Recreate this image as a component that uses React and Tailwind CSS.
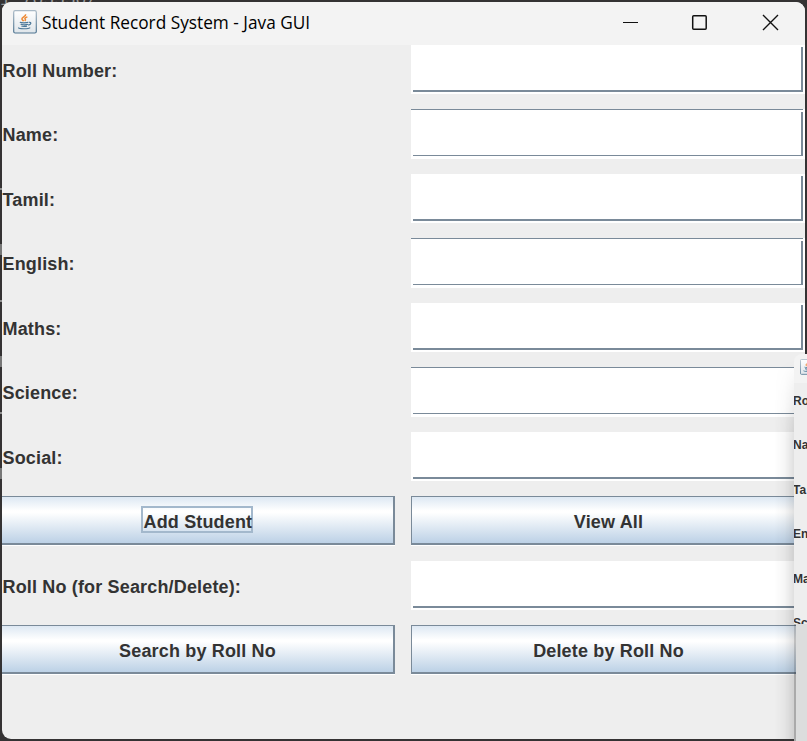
import React from "react";

function JavaIcon({ className }) {
  return (
    <svg viewBox="0 0 24 24" className={className}>
      <defs>
        <linearGradient id="frame" x1="0" y1="0" x2="0" y2="1">
          <stop offset="0" stopColor="#a9b9c6" />
          <stop offset="1" stopColor="#4d7390" />
        </linearGradient>
        <linearGradient id="face" x1="0" y1="0" x2="0" y2="1">
          <stop offset="0" stopColor="#ffffff" />
          <stop offset="1" stopColor="#dfe5ea" />
        </linearGradient>
      </defs>
      <rect x="0.7" y="0.7" width="22.6" height="22.3" rx="1.5" fill="url(#face)" stroke="url(#frame)" strokeWidth="1.2" />
      <path d="M12.6 4.2c.6 2-4 3-3.7 4.8.2 1 1.4 1.4 1.8 2.2M14.4 6.9c-2.2.7-3 1.5-2.2 2.3.6.7.2 1.1-.4 1.6" fill="none" stroke="#ee8a35" strokeWidth="1.5" />
      <path d="M6.8 12.3c1.5.7 6.5.7 8.6 0M7.6 14c.7 1 6 1 7.3.2M8.4 15.8c.7.8 4.6.8 5.6.2M16 12.3c2.8-.5 2.3 2.2-.8 2.8M5.2 17.6c1 1.5 10.4 1.5 12 0" fill="none" stroke="#4c7898" strokeWidth="1.2" />
    </svg>
  );
}

function Label({ children }) {
  return <div className="h-[52px] pl-[0.5px] leading-[52px] tracking-[0.16px]">{children}</div>;
}

/* Fields alternate between a raised 1px top rule and a 2px bottom rule. */
function Field({ ruled }) {
  return ruled ? (
    <div className="h-[50px] bg-white">
      <div className="mr-[2px] border-t border-[#7a8a99] pl-[2px] pt-[2px]">
        <div className="h-[44px] border-b border-r-2 border-[#7a8a99]" />
      </div>
    </div>
  ) : (
    <div className="h-[49px] bg-white px-[2px] pt-[2px]">
      <div className="h-[45px] border-b-2 border-r-2 border-[#7a8a99]" />
    </div>
  );
}

function Button({ children, left, focused }) {
  return (
    <div className={left ? "h-[50px] w-[394px] pr-px" : "h-[50px] w-[394px]"}>
      <div
        className={`flex h-[49px] items-center justify-center border-[#7a8a99] border-t border-b-2 bg-[linear-gradient(#dde8f3_0%,#ffffff_30%,#ffffff_34%,#bcd1e6_100%)] shadow-[0_1px_0_#ffffff] ${left ? "border-r-2" : "border-l"}`}
      >
        <span
          className={`whitespace-nowrap tracking-[0.16px] ${focused ? "mr-[2px] mb-px h-[27px] w-[112px] border-2 border-[#a3b8cc] pl-px pt-[2px] leading-[25px]" : "pt-[5px] leading-[25px]"}`}
        >
          {children}
        </span>
      </div>
    </div>
  );
}

const subjects = ["Roll Number:", "Name:", "Tamil:", "English:", "Maths:", "Science:", "Social:"];

export default function App() {
  return (
    <div className="grid h-[741px] w-[807px] overflow-hidden bg-[#343233] font-['Liberation_Sans',sans-serif]">
      {/* Slivers of the dark editor behind the window */}
      <div className="col-start-1 row-start-1">
        <div className="h-[188px] overflow-hidden">
          <p className="-mt-[9px] whitespace-nowrap font-['Liberation_Mono',monospace] text-[18px] leading-[18px] text-[#9a9a9a]">1.705550/</p>
        </div>
        <div className="grid w-[2px] auto-rows-[112px]">
          {[0, 1, 2].map((n) => (
            <div key={n}>
              <div className="h-[2px] bg-[#8e8e8e]" />
              <div className="mt-[54px] h-[11px] bg-[#777777]" />
            </div>
          ))}
        </div>
      </div>

      <main className="relative col-start-1 row-start-1 m-[2px] h-[737px] w-[803px] overflow-hidden rounded-[9px] bg-[#eeeeee]">
        <header className="flex h-[43px] items-center bg-[#f3f3f3] pl-[11px]">
          <JavaIcon className="mb-[3px] h-6 w-6" />
          <h1 className="ml-[5px] w-[566px] whitespace-nowrap pb-px font-['Open_Sans',sans-serif] text-[17.25px] leading-6 text-black">
            Student Record System - Java GUI
          </h1>
          <svg className="mb-[2px] h-[21px] w-[180px]" viewBox="0 0 180 21" fill="none" stroke="#111111">
            <path d="M15 10.5H30" strokeWidth="1" />
            <rect x="84.7" y="3.7" width="13.5" height="13.5" rx="1" strokeWidth="1.5" />
            <path d="M155 3L170 18M170 3L155 18" strokeWidth="1.4" />
          </svg>
        </header>

        <section className="grid grid-cols-[409px_394px] grid-rows-[64px_65px_64px_65px_64px_65px_64px_65px_64px_65px] text-[18px] font-bold text-[#333333]">
          {subjects.map((name, i) => (
            <React.Fragment key={name}>
              <Label>{name}</Label>
              <Field ruled={i % 2 === 1} />
            </React.Fragment>
          ))}
          <Button left focused>Add Student</Button>
          <Button>View All</Button>
          <Label>Roll No (for Search/Delete):</Label>
          <Field />
          <Button left>Search by Roll No</Button>
          <Button>Delete by Roll No</Button>
        </section>
      </main>

      {/* Neighbouring window overlapping the right edge, with its drop shadow */}
      <div className="absolute left-[774px] top-[354px] flex h-[387px] w-[33px] overflow-hidden">
        <div className="mt-[6px] h-[379px] w-[20px] bg-[linear-gradient(to_right,rgba(0,0,0,0),rgba(0,0,0,0.03)_50%,rgba(0,0,0,0.12))] [mask-image:linear-gradient(transparent,black_80px)]" />
        <div className="flex w-[13px] flex-col">
          <aside className="h-[270px] overflow-hidden rounded-tl-[8px] bg-[#eeeeee]">
            <div className="h-[29px] bg-[#f3f3f3] pl-[6px] pt-[5px]">
              <JavaIcon className="h-4 w-4 max-w-none" />
            </div>
            <div className="grid grid-rows-[44px_45px_44px_45px_44px_44px] text-[12px] font-bold leading-[36px] text-[#333333]">
              {subjects.slice(0, 6).map((name) => (
                <div key={name} className="-ml-px whitespace-nowrap">{name.slice(0, 2)}</div>
              ))}
            </div>
          </aside>
          <div className="flex grow">
            <div className="w-[2px] bg-[linear-gradient(rgba(0,0,0,0.25)_50px,#aaaaaa_50px)]" />
            <div className="grow bg-[#dcdddd]" />
          </div>
        </div>
      </div>
    </div>
  );
}
